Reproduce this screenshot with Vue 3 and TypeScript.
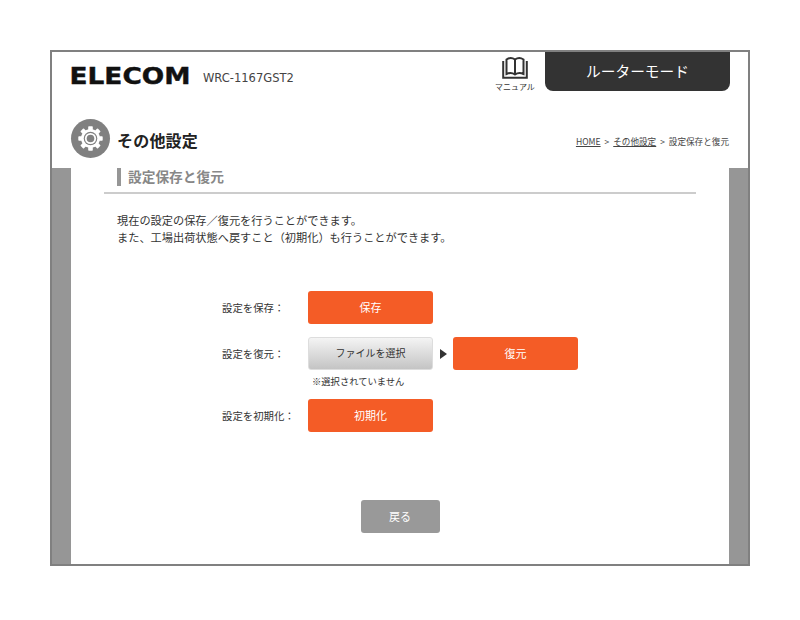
<script setup lang="ts">
const teeth = [0, 45, 90, 135, 180, 225, 270, 315]
</script>

<template>
  <div class="page">
    <div class="frame">
      <header class="top">
        <div class="brand">
          <svg class="logo" width="120" height="20" viewBox="0 0 120 20" role="img" aria-label="ELECOM">
            <text x="-1.5" y="17.5" textLength="121" lengthAdjust="spacingAndGlyphs" class="logo-text">ELECOM</text>
          </svg>
          <span class="model">WRC-1167GST2</span>
        </div>
        <div class="manual">
          <svg width="26" height="22" viewBox="0 0 26 22" fill="none" stroke="#333" stroke-width="2">
            <path d="M4.500 2.500C7 .8 10.500 .8 13 2.500C15.500 .8 19 .8 21.500 2.500V17C19 15.800 15.500 15.800 13 17.500C10.500 15.800 7 15.800 4.500 17Z" />
            <path d="M13 2.500V17.500" />
            <path d="M1.200 4V20.800H24.800V4" />
          </svg>
          <span>マニュアル</span>
        </div>
        <div class="mode">ルーターモード</div>
      </header>

      <div class="title-row">
        <span class="gear">
          <svg width="25" height="25" viewBox="0 0 25 25">
            <rect v-for="a in teeth" :key="a" x="10.200" y="0.300" width="4.600" height="5" rx="0.800" fill="#fff" :transform="`rotate(${a} 12.500 12.500)`" />
            <circle cx="12.500" cy="12.500" r="9.500" fill="#fff" />
            <circle cx="12.500" cy="12.500" r="6.800" fill="#808080" />
            <circle cx="12.500" cy="12.500" r="5.600" fill="#fff" />
            <circle cx="12.500" cy="12.500" r="3.800" fill="#808080" />
          </svg>
        </span>
        <h1>その他設定</h1>
        <nav class="crumbs"><a>HOME</a> &gt; <a>その他設定</a> &gt; 設定保存と復元</nav>
      </div>

      <div class="body">
        <main class="sheet">
          <h2 class="section"><span>設定保存と復元</span></h2>
          <p class="intro">現在の設定の保存／復元を行うことができます。<br />また、工場出荷状態へ戻すこと（初期化）も行うことができます。</p>

          <div class="form">
            <div class="row">
              <label>設定を保存：</label>
              <button class="btn orange">保存</button>
            </div>
            <div class="row restore">
              <label>設定を復元：</label>
              <button class="btn file">ファイルを選択</button>
              <span class="arrow"></span>
              <button class="btn orange">復元</button>
            </div>
            <p class="note">※選択されていません</p>
            <div class="row">
              <label>設定を初期化：</label>
              <button class="btn orange">初期化</button>
            </div>
          </div>

          <div class="back"><button class="btn grey">戻る</button></div>
        </main>
      </div>
    </div>
  </div>
</template>

<style>
body { margin: 0; background: #fff; }
</style>

<style scoped>
.page {
  padding-top: 50px;
  height: 570px;
  box-sizing: border-box;
  font-family: "Noto Sans CJK JP", "Noto Sans", sans-serif;
  color: #333;
  text-spacing-trim: space-all;
}
.frame {
  width: 700px;
  height: 516px;
  margin: 0 0 0 50px;
  box-sizing: border-box;
  border: 2px solid #808080;
  display: flex;
  flex-direction: column;
  background: #fff;
}
.top {
  display: flex;
  height: 59px;
  padding: 0 19px;
  align-items: flex-start;
}
.brand {
  display: flex;
  align-items: center;
  gap: 13px;
  padding-top: 14px;
  flex: 1;
}
.logo { overflow: visible; flex: none; }
.logo-text {
  font-family: "DejaVu Sans", sans-serif;
  font-weight: 700;
  font-size: 23px;
  fill: #111;
  stroke: #111;
  stroke-width: 0.4px;
}
.model {
  font-family: "DejaVu Sans", sans-serif;
  font-size: 11.500px;
  color: #444;
  margin-top: 4px;
  margin-left: -1px;
}
.manual {
  width: 40px;
  margin-right: 10px;
  padding-top: 5px;
  display: flex;
  flex-direction: column;
  align-items: center;
  font-size: 8px;
  line-height: 10px;
  gap: 3px;
  white-space: nowrap;
}
.mode {
  width: 185px;
  height: 39px;
  margin-right: -1px;
  background: #333;
  border-radius: 0 0 8px 8px;
  color: #fff;
  font-size: 14.700px;
  line-height: 37px;
  text-align: center;
}
.title-row {
  height: 57px;
  padding: 0 19px;
  display: flex;
  align-items: center;
}
.gear {
  width: 39px;
  height: 39px;
  border-radius: 50%;
  background: #808080;
  display: flex;
  align-items: center;
  justify-content: center;
  margin-bottom: 3px;
}
h1 {
  margin: 0 0 0 7px;
  font-size: 16px;
  font-weight: 700;
  color: #222;
  flex: 1;
  letter-spacing: 0.2px;
}
.crumbs {
  font-size: 8.600px;
  word-spacing: 2px;
  color: #444;
  margin-top: 3px;
}
.crumbs a { text-decoration: underline; }
.body {
  flex: 1;
  background: #969696;
  padding: 0 19px;
  display: flex;
  min-height: 0;
}
.sheet {
  flex: 1;
  background: #fff;
  padding: 0 33px;
}
.section {
  margin: 0;
  height: 24px;
  border-bottom: 2px solid #ccc;
  padding-left: 13px;
}
.section span {
  display: block;
  height: 18px;
  border-left: 4px solid #969696;
  padding-left: 7px;
  font-size: 13.700px;
  font-weight: 700;
  line-height: 16px;
  color: #888;
}
.intro {
  margin: 18px 0 0 13px;
  font-size: 11.200px;
  line-height: 17px;
  color: #333;
}
.form {
  margin-top: 45px;
  padding-left: 118px;
}
.row {
  display: flex;
  align-items: center;
  height: 33px;
}
.restore { margin-top: 13px; }
.row label {
  width: 86px;
  font-size: 10.400px;
  color: #333;
}
.btn {
  display: block;
  width: 125px;
  height: 33px;
  border: 0;
  border-radius: 3px;
  padding: 0 0 2px;
  font-family: inherit;
  font-size: 11px;
  color: #fff;
}
.orange {
  background: #f45c26;
}
.file {
  background: linear-gradient(#f4f4f4, #c4c4c4);
  color: #333;
  border: 1px solid #ddd;
  box-sizing: border-box;
  font-size: 10px;
}
.arrow {
  width: 0;
  height: 0;
  margin: 0 6px 0 7px;
  border-left: 7px solid #333;
  border-top: 5px solid transparent;
  border-bottom: 5px solid transparent;
}
.note {
  margin: 5px 0 0 90px;
  font-size: 9.300px;
  line-height: 12px;
  height: 24px;
  color: #333;
}
.back {
  margin-top: 68px;
  display: flex;
  justify-content: center;
}
.grey {
  width: 79px;
  background: #999;
}
</style>
